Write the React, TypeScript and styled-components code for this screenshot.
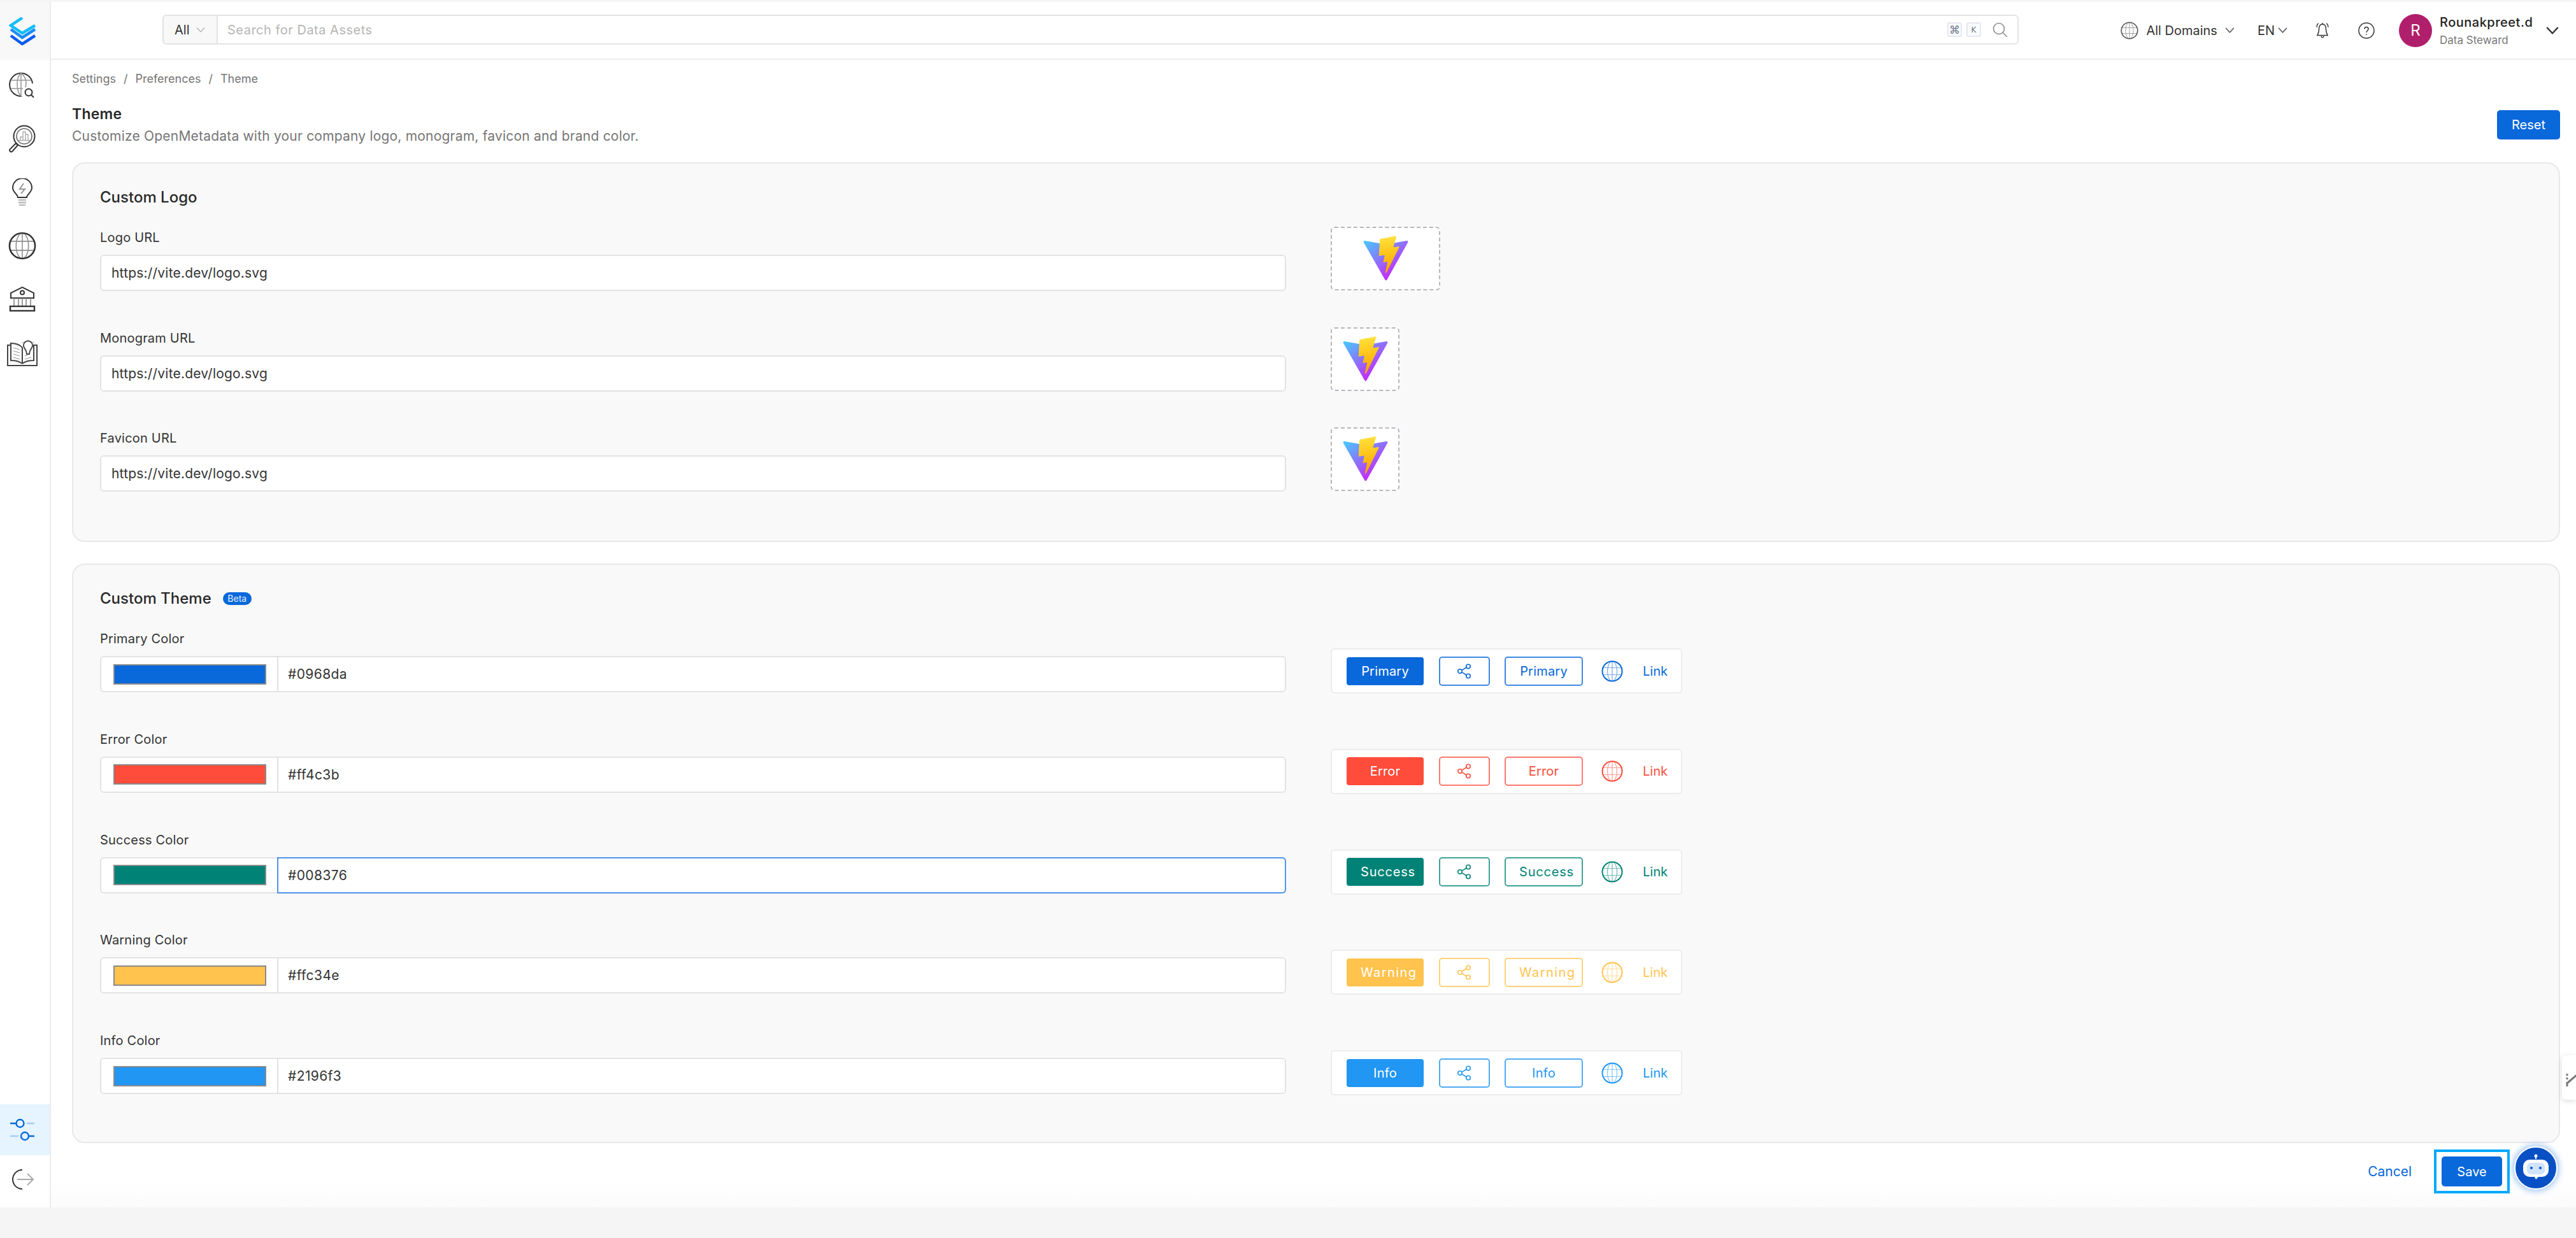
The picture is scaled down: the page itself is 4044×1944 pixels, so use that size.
import styled, { createGlobalStyle } from 'styled-components'
import { ReactNode } from 'react'

const FONT = `Inter, "Noto Sans", "Liberation Sans", sans-serif`

const themeRows = [
  { label: 'Primary Color', name: 'Primary', color: '#0968da', outline: '#3f88e2', value: '#0968da', track: 0.2 },
  { label: 'Error Color', name: 'Error', color: '#ff4c3b', outline: '#ff7a6e', value: '#ff4c3b', track: 0.2 },
  { label: 'Success Color', name: 'Success', color: '#008376', outline: '#40a298', value: '#008376', focused: true, track: 0.8, long: true },
  { label: 'Warning Color', name: 'Warning', color: '#ffc34e', outline: '#ffd27a', value: '#ffc34e', track: 1.4, long: true },
  { label: 'Info Color', name: 'Info', color: '#2196f3', outline: '#4fabf5', value: '#2196f3', track: 0.2 },
]

const logoRows = [
  { label: 'Logo URL', wide: true },
  { label: 'Monogram URL', wide: false },
  { label: 'Favicon URL', wide: false },
]

const GlobeIcon = ({ size, color = '#555' }: { size: number; color?: string }) => (
  <svg width={size} height={size} viewBox="0 0 34 34" fill="none" stroke={color}>
    <circle cx="17" cy="17" r="15.5" strokeWidth="2" />
    <g strokeWidth="1.2" opacity="0.55">
      <ellipse cx="17" cy="17" rx="7.5" ry="15.5" />
      <path d="M17 1.5v31M2.5 11.5h29M2.5 22.5h29" />
    </g>
  </svg>
)

const Chevron = ({ size = 15, color = '#555', width = 1.6 }: { size?: number; color?: string; width?: number }) => (
  <svg width={size} height={size} viewBox="0 0 16 16" fill="none" stroke={color} strokeWidth={width}>
    <path d="M1.5 4.5L8 11.5L14.5 4.5" strokeLinecap="round" />
  </svg>
)

const ShareIcon = ({ color }: { color: string }) => (
  <svg width="24" height="24" viewBox="0 0 24 24" fill="none" stroke={color} strokeWidth="1.6">
    <circle cx="18" cy="4.5" r="3.2" />
    <circle cx="5" cy="12" r="3.2" />
    <circle cx="18" cy="19.5" r="3.2" />
    <path d="M8 10.4L15.2 6M8 13.6L15.2 18" />
  </svg>
)

const ViteLogo = ({ id }: { id: string }) => (
  <svg width="73" height="72" viewBox="0 0 410 404" fill="none">
    <path
      d="M399.641 59.5246L215.643 388.545C211.844 395.338 202.084 395.378 198.228 388.618L10.5817 59.5563C6.38087 52.1896 12.6802 43.2665 21.0281 44.7586L205.223 77.6824C206.398 77.8924 207.601 77.8904 208.776 77.6763L389.119 44.8058C397.439 43.2894 403.768 52.1434 399.641 59.5246Z"
      fill={`url(#${id}a)`}
    />
    <path
      d="M292.965 1.5744L156.801 28.2552C154.563 28.6937 152.906 30.5903 152.771 32.8664L144.395 174.33C144.198 177.662 147.258 180.248 150.51 179.498L188.42 170.749C191.967 169.931 195.172 173.055 194.443 176.622L183.18 231.775C182.422 235.487 185.907 238.661 189.532 237.56L212.947 230.446C216.577 229.344 220.065 232.527 219.297 236.242L201.398 322.875C200.278 328.294 207.486 331.249 210.492 326.603L212.5 323.5L323.454 102.072C325.312 98.3645 322.108 94.137 318.036 94.9228L279.014 102.454C275.347 103.161 272.227 99.746 273.262 96.1583L298.731 7.86689C299.767 4.27314 296.636 0.855181 292.965 1.5744Z"
      fill={`url(#${id}b)`}
    />
    <defs>
      <linearGradient id={`${id}a`} x1="6" y1="33" x2="235" y2="344" gradientUnits="userSpaceOnUse">
        <stop stopColor="#41D1FF" />
        <stop offset="1" stopColor="#BD34FE" />
      </linearGradient>
      <linearGradient id={`${id}b`} x1="194.651" y1="8.818" x2="236.076" y2="292.989" gradientUnits="userSpaceOnUse">
        <stop stopColor="#FFEA83" />
        <stop offset="0.0833" stopColor="#FFDD35" />
        <stop offset="1" stopColor="#FFA800" />
      </linearGradient>
    </defs>
  </svg>
)

const BrandLogo = () => (
  <svg width="44" height="44" viewBox="0 0 44 44" fill="none" strokeWidth="4.5">
    <path d="M21 1L3 13L21 25L41 13" stroke="#12bdf8" />
    <path d="M3 19L21 32L41 19" stroke="#1a8df5" />
    <path d="M3 29L21 42L41 29" stroke="#0a5cf0" />
  </svg>
)

const navIcons: ReactNode[] = [
  <svg key="explore" width="42" height="42" viewBox="0 0 42 42" fill="none" stroke="#333" strokeWidth="2">
    <path d="M37 18A18 18 0 1 0 20 38" />
    <g stroke="#999" strokeWidth="1.6">
      <path d="M19 2C11 8 11 30 19 38M19 2C27 8 28 16 26 24M19 2V38M3 13H35M3 26H22" />
    </g>
    <circle cx="31" cy="32" r="5.5" />
    <path d="M35 36L39 40" />
  </svg>,
  <svg key="insights" width="44" height="44" viewBox="0 0 44 44" fill="none" stroke="#333" strokeWidth="2">
    <circle cx="25" cy="18" r="16.5" />
    <circle cx="25" cy="18" r="12" stroke="#666" strokeWidth="1.6" />
    <path d="M19 24v-5h4v5M23 24V11h4v13M27 24V15h4v9M16 24.500h18" stroke="#aaa" strokeWidth="1.4" />
    <path d="M12 29L15 32L6 42C4 43.500 1 41 2.500 38.500Z" />
  </svg>,
  <svg key="idea" width="34" height="44" viewBox="0 0 34 44" fill="none" stroke="#333" strokeWidth="2">
    <path d="M10 30C10 25 2 22 2 15A15 15 0 0 1 32 15C32 22 24 25 24 30Z" />
    <path d="M19 8L13 17H21L15 24" stroke="#999" strokeWidth="2" />
    <path d="M11 34H23M11 38H23M12 42H22" stroke="#bbb" strokeWidth="2.4" />
  </svg>,
  <GlobeIcon key="globe" size={44} color="#333" />,
  <svg key="bank" width="44" height="42" viewBox="0 0 44 42" fill="none" stroke="#333" strokeWidth="2">
    <path d="M4 19V11L22 2L40 11V19Z" />
    <circle cx="22" cy="10.500" r="3" />
    <path d="M9 19V32M16 19V32M22 19V32M28 19V32M35 19V32" stroke="#888" strokeWidth="1.6" />
    <rect x="3" y="32" width="38" height="7" strokeWidth="2.4" />
  </svg>,
  <svg key="book" width="50" height="44" viewBox="0 0 50 44" fill="none" stroke="#444" strokeWidth="2">
    <path d="M25 39C20 35 13 34 7 34V7C14 7 21 9 25 14V39" />
    <path d="M25 39C30 35 37 34 43 34V9" />
    <path d="M7 10H2V42H48V10H43" />
    <path d="M11 14L21 17M11 19L21 22M11 24L21 27M11 29L21 32M29 32L39 29M29 27L33 26" stroke="#999" strokeWidth="1.2" />
    <path d="M28 14A7 7 0 1 1 40 14C38 17 36 19 36 24H32C32 19 30 17 28 14Z" />
    <path d="M34 1V3M25 5L27 6.500M43 5L41 6.500" stroke="#aaa" strokeWidth="1.4" />
  </svg>,
]

const GlobalStyle = createGlobalStyle`
  html, body {
    margin: 0;
    padding: 0;
    background: #f5f5f5;
    font-family: ${FONT};
  }
  * {
    box-sizing: border-box;
  }
`

const App = () => {
  return (
    <Page>
      <GlobalStyle />
      <Frame>
        <Sidebar>
          <LogoCell>
            <BrandLogo />
          </LogoCell>
          <NavList>
            {navIcons.map((icon, i) => (
              <NavItem key={i}>{icon}</NavItem>
            ))}
          </NavList>
          <SideBottom>
            <ActiveItem>
              <svg width="38" height="36" viewBox="0 0 38 36" fill="none" strokeWidth="2.4">
                <circle cx="15.500" cy="8" r="6" stroke="#0968da" />
                <circle cx="23" cy="28" r="6" stroke="#0968da" />
                <path d="M0 8H9M29 28H38" stroke="#0968da" />
                <path d="M26 8H38M0 28H13" stroke="#a8ccf4" />
              </svg>
            </ActiveItem>
            <LogoutItem>
              <svg width="34" height="32" viewBox="0 0 34 32" fill="none" strokeWidth="2">
                <path d="M16 1A15 15 0 0 0 16 31" stroke="#333" />
                <path d="M8 16H32M24 7L33 16L24 25" stroke="#aaa" />
              </svg>
            </LogoutItem>
          </SideBottom>
        </Sidebar>
        <MainColumn>
          <Header>
            <SearchBox>
              <SearchSelect>
                All
                <Chevron color="#999" size={14} width={1.2} />
              </SearchSelect>
              <SearchInput>
                <Placeholder>Search for Data Assets</Placeholder>
                <Kbd>⌘</Kbd>
                <Kbd $small>K</Kbd>
                <SearchGlyph>
                  <svg width="24" height="24" viewBox="0 0 24 24" fill="none" stroke="#8c8c8c" strokeWidth="1.6">
                    <circle cx="10" cy="10" r="8.500" />
                    <path d="M16 16L23 23" />
                  </svg>
                </SearchGlyph>
              </SearchInput>
            </SearchBox>
            <HeaderActions>
              <DomainPick>
                <GlobeIcon size={28} color="#555" />
                <HeaderText>All Domains</HeaderText>
                <Chevron />
              </DomainPick>
              <LangPick>
                <HeaderText>EN</HeaderText>
                <Chevron />
              </LangPick>
              <IconSlot>
                <svg width="26" height="26" viewBox="0 0 26 26" fill="none" stroke="#333" strokeWidth="1.5">
                  <path d="M13 3C9 3 7.500 6.500 7.500 11C7.500 15 6.500 17.500 5 20.500H21C19.500 17.500 18.500 15 18.500 11C18.500 6.500 17 3 13 3Z" />
                  <path d="M11 21.500C11.500 24.500 14.500 24.500 15 21.500M13 1V3M6.500 1.500C4.500 3.500 4 5.500 4 8M19.500 1.500C21.500 3.500 22 5.500 22 8" />
                </svg>
              </IconSlot>
              <IconSlot>
                <svg width="26" height="26" viewBox="0 0 26 26" fill="none" stroke="#333" strokeWidth="1.5">
                  <circle cx="13" cy="13" r="12" />
                  <path d="M10 10.500C10 6.500 16 6.500 16 10.500C16 13 13 13 13 16M13 18.500V20" />
                </svg>
              </IconSlot>
              <UserBlock>
                <Avatar>R</Avatar>
                <UserText>
                  <UserName>Rounakpreet.d</UserName>
                  <UserRole>Data Steward</UserRole>
                </UserText>
                <Chevron size={20} color="#333" width={1.8} />
              </UserBlock>
            </HeaderActions>
          </Header>
          <Content>
            <Breadcrumb>
              <span>Settings</span>
              <span>/</span>
              <span>Preferences</span>
              <span>/</span>
              <span>Theme</span>
            </Breadcrumb>
            <TitleRow>
              <div>
                <PageTitle>Theme</PageTitle>
                <PageSubtitle>Customize OpenMetadata with your company logo, monogram, favicon and brand color.</PageSubtitle>
              </div>
              <ResetButton $w={99} $h={46}>Reset</ResetButton>
            </TitleRow>
            <LogoCard>
              <CardTitle>Custom Logo</CardTitle>
              <LogoRows>
                {logoRows.map(row => (
                  <FormRow key={row.label}>
                    <FieldColumn>
                      <FieldLabel>{row.label}</FieldLabel>
                      <TextField>https://vite.dev/logo.svg</TextField>
                    </FieldColumn>
                    <Preview $wide={row.wide}>
                      <ViteLogo id={row.label.slice(0, 2)} />
                    </Preview>
                  </FormRow>
                ))}
              </LogoRows>
            </LogoCard>
            <ThemeCard>
              <CardTitle>
                Custom Theme
                <BetaBadge>Beta</BetaBadge>
              </CardTitle>
              <ThemeRows>
                {themeRows.map(row => (
                  <FormRow key={row.label}>
                    <FieldColumn>
                      <FieldLabel>{row.label}</FieldLabel>
                      <ColorField>
                        <SwatchCell>
                          <Swatch $color={row.color} />
                        </SwatchCell>
                        <ColorValue $focused={row.focused}>{row.value}</ColorValue>
                      </ColorField>
                    </FieldColumn>
                    <Demo>
                      <SolidDemo $color={row.color} $track={row.track} $long={row.long}>{row.name}</SolidDemo>
                      <IconDemo $outline={row.outline}>
                        <ShareIcon color={row.color} />
                      </IconDemo>
                      <OutlineDemo $color={row.color} $outline={row.outline} $track={row.track} $long={row.long}>{row.name}</OutlineDemo>
                      <GlobeSlot>
                        <GlobeIcon size={34} color={row.color} />
                      </GlobeSlot>
                      <LinkDemo $color={row.color}>Link</LinkDemo>
                    </Demo>
                  </FormRow>
                ))}
              </ThemeRows>
            </ThemeCard>
            <Footer>
              <CancelLink>Cancel</CancelLink>
              <SaveHighlight>
                <PrimaryButton $w={95} $h={47}>Save</PrimaryButton>
              </SaveHighlight>
            </Footer>
            <BotBubble>
              <svg width="44" height="44" viewBox="0 0 44 44" fill="none">
                <path d="M22 2V8" stroke="#fff" strokeWidth="2" />
                <circle cx="22" cy="3" r="2.500" fill="#fff" />
                <rect x="2" y="9" width="40" height="27" rx="10" fill="#fff" />
                <rect x="8" y="14" width="28" height="18" rx="6" fill="#cfe3ff" />
                <circle cx="15" cy="22" r="2" fill="#0950c5" />
                <circle cx="29" cy="22" r="2" fill="#0950c5" />
                <path d="M20 36H26L22 40Z" fill="#fff" />
              </svg>
            </BotBubble>
            <SideTab>
              <svg width="20" height="24" viewBox="0 0 20 24" fill="none" stroke="#777" strokeWidth="3">
                <path d="M2 3V6M2 9V12M2 16V23M2 18L16 6L20 4" />
              </svg>
            </SideTab>
          </Content>
        </MainColumn>
      </Frame>
    </Page>
  )
}

export default App

const Page = styled.div`
  width: 4044px;
  height: 1944px;
  padding-top: 3px;
  background: #f5f5f5;
  overflow: hidden;
`

const Frame = styled.div`
  display: flex;
  height: 1893px;
  background: #fff;
`

const Sidebar = styled.aside`
  width: 80px;
  flex-shrink: 0;
  display: flex;
  flex-direction: column;
  border-right: 2px solid #ececec;
`

const LogoCell = styled.div`
  height: 91px;
  display: flex;
  align-items: center;
  justify-content: center;
  background: #f8f8f8;
  padding-right: 7px;
`

const NavList = styled.nav`
  display: flex;
  flex-direction: column;
  margin-top: -2px;
`

const NavItem = styled.div`
  height: 84px;
  display: flex;
  align-items: center;
  justify-content: center;
  padding-right: 9px;
`

const SideBottom = styled.div`
  margin-top: auto;
  display: flex;
  flex-direction: column;
`

const ActiveItem = styled.div`
  height: 80px;
  display: flex;
  align-items: center;
  justify-content: center;
  background: #e6f4ff;
  padding-right: 9px;
`

const LogoutItem = styled.div`
  height: 82px;
  display: flex;
  align-items: center;
  justify-content: center;
  padding: 0 7px 6px 0;
`

const MainColumn = styled.div`
  flex: 1;
  display: flex;
  flex-direction: column;
  min-width: 0;
`

const Header = styled.header`
  height: 91px;
  flex-shrink: 0;
  display: flex;
  align-items: center;
  justify-content: space-between;
  border-bottom: 2px solid #ececec;
  padding: 0 27px 0 175px;
`

const SearchBox = styled.div`
  width: 2914px;
  height: 47px;
  margin-top: -2px;
  display: flex;
  background: #fff;
  border: 2px solid #e3e3e3;
  border-radius: 6px;
`

const SearchSelect = styled.div`
  width: 85px;
  display: flex;
  align-items: center;
  gap: 10px;
  padding-left: 17px;
  background: #f8f8f8;
  border-right: 2px solid #e3e3e3;
  border-radius: 4px 0 0 4px;
  font-size: 20px;
  color: #333;
`

const SearchInput = styled.div`
  flex: 1;
  display: flex;
  align-items: center;
  padding: 0 15px;
`

const Placeholder = styled.span`
  flex: 1;
  font-size: 20px;
  letter-spacing: 0.5px;
  color: #b5b5b5;
`

const Kbd = styled.span<{ $small?: boolean }>`
  width: 23px;
  height: 23px;
  margin-right: 7px;
  display: flex;
  align-items: center;
  justify-content: center;
  border: 2px solid #e4e8f0;
  border-radius: 3px;
  background: #fafbfd;
  color: #6e7689;
  font-family: "DejaVu Sans", sans-serif;
  font-size: ${p => (p.$small ? '12px' : '17px')};
`

const SearchGlyph = styled.span`
  display: flex;
  margin-left: 11px;
`

const HeaderActions = styled.div`
  display: flex;
  align-items: center;
  height: 100%;
`

const HeaderText = styled.span`
  font-size: 20px;
  color: #333;
`

const DomainPick = styled.div`
  display: flex;
  align-items: center;
  gap: 12px;
  margin-right: 36px;
`

const LangPick = styled.div`
  display: flex;
  align-items: center;
  gap: 5px;
  margin-right: 42px;
`

const IconSlot = styled.span`
  display: flex;
  margin-right: 43px;
`

const UserBlock = styled.div`
  display: flex;
  align-items: center;
  margin-left: -5px;
`

const Avatar = styled.div`
  width: 52px;
  height: 52px;
  border-radius: 50%;
  background: #b01f6b;
  color: #fff;
  font-size: 24px;
  display: flex;
  align-items: center;
  justify-content: center;
`

const UserText = styled.div`
  width: 167px;
  margin-left: 12px;
  display: flex;
  flex-direction: column;
  gap: 6px;
`

const UserName = styled.span`
  font-size: 20px;
  font-weight: 500;
  line-height: 24px;
  letter-spacing: 0.5px;
  color: #222;
`

const UserRole = styled.span`
  font-size: 17px;
  line-height: 20px;
  color: #777;
`

const Content = styled.main`
  position: relative;
  flex: 1;
  padding: 0 25px 0 33px;
  background: linear-gradient(#fff 1760px, #fbfbfb);
`

const Breadcrumb = styled.div`
  padding-top: 18px;
  height: 52px;
  display: flex;
  gap: 12px;
  font-size: 18px;
  line-height: 24px;
  color: #757575;
`

const TitleRow = styled.div`
  height: 109px;
  padding-top: 18px;
  display: flex;
  justify-content: space-between;
  align-items: flex-start;
`

const PageTitle = styled.h1`
  margin: 0;
  font-size: 23px;
  font-weight: 600;
  line-height: 30px;
  letter-spacing: 0.2px;
  color: #292929;
`

const PageSubtitle = styled.p`
  margin: 6px 0 0;
  font-size: 21px;
  line-height: 28px;
  letter-spacing: 0.2px;
  color: #757575;
`

const PrimaryButton = styled.button<{ $w: number; $h: number }>`
  width: ${p => p.$w}px;
  height: ${p => p.$h}px;
  margin: 0;
  padding: 0;
  border: none;
  border-radius: 5px;
  background: #0968da;
  color: #fff;
  font-family: ${FONT};
  font-size: 20px;
`

const ResetButton = styled(PrimaryButton)`
  margin-top: 9px;
`

const Card = styled.section`
  border: 2px solid #e8e8e8;
  border-radius: 20px;
  background: #f9f9f9;
  padding: 0 42px;
`

const LogoCard = styled(Card)`
  height: 596px;
`

const ThemeCard = styled(Card)`
  height: 910px;
  margin-top: 34px;
`

const CardTitle = styled.h2`
  margin: 0;
  display: flex;
  align-items: center;
  gap: 18px;
  padding-top: 26px;
  height: 80px;
  font-size: 24px;
  font-weight: 500;
  line-height: 30px;
  color: #292929;
`

const BetaBadge = styled.span`
  width: 45px;
  height: 20px;
  border-radius: 10px;
  background: #0968da;
  color: #e6f0fc;
  font-size: 14px;
  font-weight: 400;
  line-height: 20px;
  text-align: center;
`

const LogoRows = styled.div`
  display: flex;
  flex-direction: column;
  gap: 56.5px;
  margin-top: 19px;
`

const ThemeRows = styled.div`
  display: flex;
  flex-direction: column;
  gap: 60.75px;
  margin-top: 23px;
`

const FormRow = styled.div`
  display: flex;
  align-items: flex-end;
  gap: 70px;
`

const FieldColumn = styled.div`
  width: 1862px;
  flex-shrink: 0;
`

const FieldLabel = styled.div`
  height: 40px;
  font-size: 20px;
  line-height: 26px;
  letter-spacing: 0.2px;
  color: #333;
`

const TextField = styled.div`
  height: 57px;
  display: flex;
  align-items: center;
  padding-left: 16px;
  background: #fff;
  border: 2px solid #e3e3e3;
  border-radius: 6px;
  font-size: 21px;
  letter-spacing: 0.2px;
  color: #333;
`

const Preview = styled.div<{ $wide: boolean }>`
  width: ${p => (p.$wide ? '172px' : '108px')};
  height: 100px;
  margin-bottom: 1px;
  display: flex;
  align-items: center;
  justify-content: center;
  background: #fff;
  border: 2px dashed #b4b7bd;
  border-radius: 6px;
`

const ColorField = styled.div`
  height: 57px;
  display: flex;
  background: #fff;
  border: 2px solid #e3e3e3;
  border-radius: 6px;
`

const SwatchCell = styled.div`
  width: 278px;
  flex-shrink: 0;
  display: flex;
  align-items: center;
  justify-content: center;
  padding-right: 1px;
`

const Swatch = styled.span<{ $color: string }>`
  display: block;
  width: 240px;
  height: 32px;
  background: ${p => p.$color};
  border: 2px solid #8a8a8a;
`

const ColorValue = styled.div<{ $focused?: boolean }>`
  flex: 1;
  display: flex;
  align-items: center;
  padding-left: 15px;
  font-size: 21px;
  letter-spacing: 0.4px;
  color: #333;
  margin: -2px;
  border-left: 2px solid #e3e3e3;
  ${p => p.$focused && 'border: 2px solid #4d94e8; border-radius: 0 6px 6px 0;'}
`

const Demo = styled.div`
  width: 552px;
  height: 71px;
  margin-bottom: -2px;
  display: flex;
  align-items: center;
  padding-left: 23px;
  background: #fff;
  border: 2px solid #ececec;
  border-radius: 6px;
`

const SolidDemo = styled.span<{ $color: string; $track: number; $long?: boolean }>`
  width: 121px;
  height: 44px;
  display: flex;
  align-items: center;
  justify-content: ${p => (p.$long ? 'flex-start' : 'center')};
  padding-left: ${p => (p.$long ? '22px' : '0')};
  border-radius: 4px;
  background: ${p => p.$color};
  color: #fff;
  font-size: 20px;
  letter-spacing: ${p => p.$track}px;
`

const IconDemo = styled.span<{ $outline: string }>`
  width: 80px;
  height: 46px;
  margin-left: 24px;
  display: flex;
  align-items: center;
  justify-content: center;
  border: 2px solid ${p => p.$outline};
  border-radius: 5px;
`

const OutlineDemo = styled.span<{ $color: string; $outline: string; $track: number; $long?: boolean }>`
  width: 123px;
  height: 46px;
  margin-left: 23px;
  display: flex;
  align-items: center;
  justify-content: ${p => (p.$long ? 'flex-start' : 'center')};
  padding-left: ${p => (p.$long ? '21px' : '0')};
  border: 2px solid ${p => p.$outline};
  border-radius: 5px;
  color: ${p => p.$color};
  font-size: 20px;
  letter-spacing: ${p => p.$track}px;
`

const GlobeSlot = styled.span`
  display: flex;
  margin-left: 29px;
`

const LinkDemo = styled.span<{ $color: string }>`
  margin-left: 31px;
  font-size: 20px;
  color: ${p => p.$color};
`

const Footer = styled.div`
  display: flex;
  justify-content: flex-end;
  align-items: center;
  gap: 35px;
  padding: 10px 79px 0 0;
`

const CancelLink = styled.span`
  font-size: 21px;
  color: #0968da;
`

const SaveHighlight = styled.div`
  width: 119px;
  height: 69px;
  display: flex;
  align-items: center;
  justify-content: center;
  border: 4px solid #00a9ff;
`

const BotBubble = styled.div`
  position: absolute;
  left: 3867px;
  top: 1706px;
  width: 68px;
  height: 68px;
  border-radius: 50%;
  background: #0950c5;
  border: 2px solid #fff;
  box-shadow: 0 0 10px 3px rgba(9, 104, 218, 0.35);
  display: flex;
  align-items: center;
  justify-content: center;
`

const SideTab = styled.div`
  position: absolute;
  right: 0;
  top: 1563px;
  width: 22px;
  height: 70px;
  padding: 26px 0 0 6px;
  background: #fff;
  border-radius: 6px 0 0 6px;
  box-shadow: 0 2px 8px rgba(0, 0, 0, 0.15);
  overflow: hidden;
`
